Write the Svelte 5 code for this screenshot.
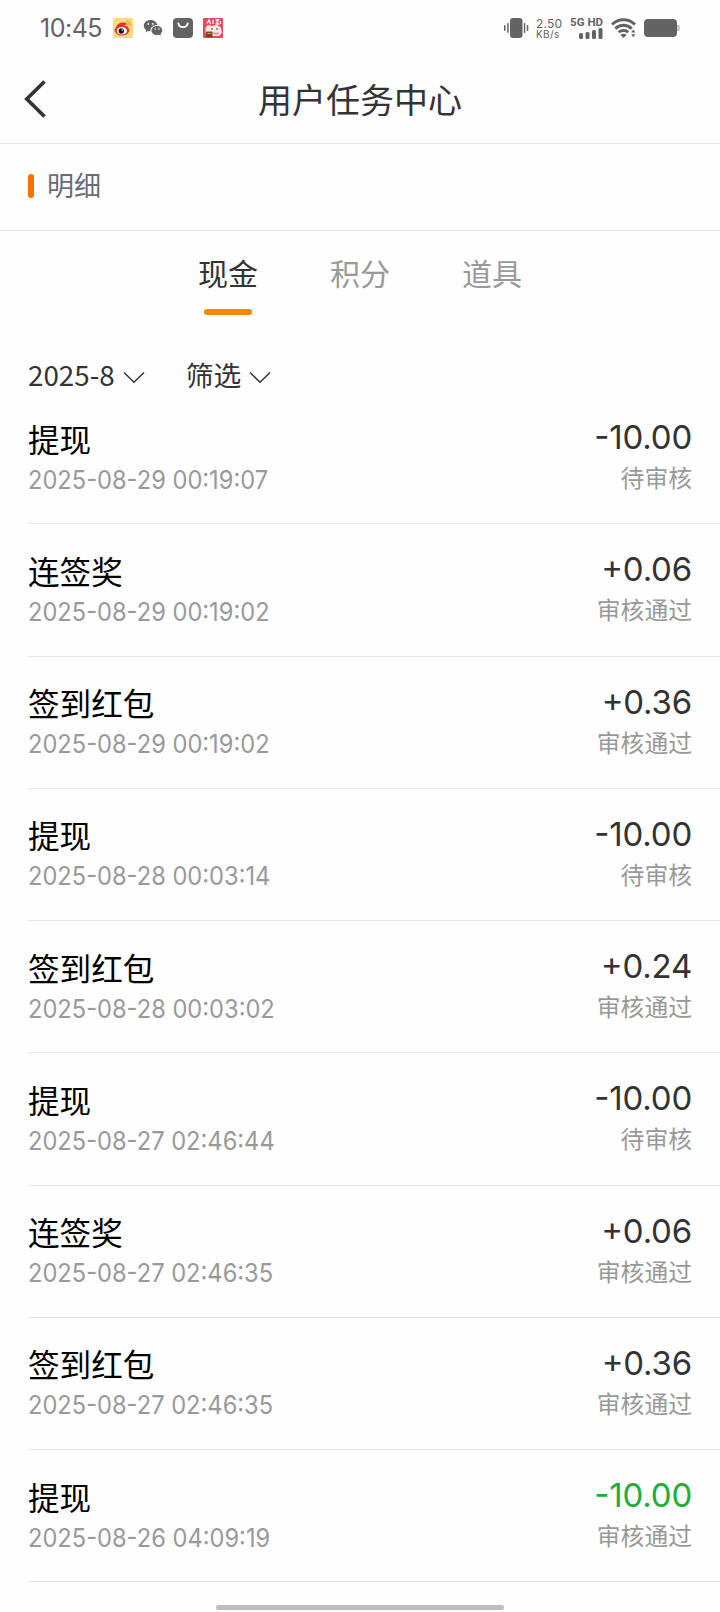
<script lang="ts">
  type Entry = {
    title: string;
    time: string;
    amount: string;
    status: string;
    income?: boolean;
  };

  const tabs = ["现金", "积分", "道具"];
  const filters = ["2025-8", "筛选"];

  const entries: Entry[] = [
    { title: "提现", time: "2025-08-29 00:19:07", amount: "-10.00", status: "待审核" },
    { title: "连签奖", time: "2025-08-29 00:19:02", amount: "+0.06", status: "审核通过" },
    { title: "签到红包", time: "2025-08-29 00:19:02", amount: "+0.36", status: "审核通过" },
    { title: "提现", time: "2025-08-28 00:03:14", amount: "-10.00", status: "待审核" },
    { title: "签到红包", time: "2025-08-28 00:03:02", amount: "+0.24", status: "审核通过" },
    { title: "提现", time: "2025-08-27 02:46:44", amount: "-10.00", status: "待审核" },
    { title: "连签奖", time: "2025-08-27 02:46:35", amount: "+0.06", status: "审核通过" },
    { title: "签到红包", time: "2025-08-27 02:46:35", amount: "+0.36", status: "审核通过" },
    { title: "提现", time: "2025-08-26 04:09:19", amount: "-10.00", status: "审核通过", income: true },
  ];

  let activeTab = $state(0);
</script>

<div class="screen">
  <div class="statusbar">
    <div class="left">
      <span class="clock">10:45</span>
      <svg class="app" viewBox="0 0 20 20">
        <rect width="20" height="20" rx="1.5" fill="#fbdc78" />
        <ellipse cx="9" cy="12.3" rx="7.3" ry="5.3" fill="#e0322d" />
        <path d="M3 9c1.500-3 5-5 6.500-4.200 1.500-.6 4-.4 4 1.800z" fill="#e0322d" />
        <ellipse cx="8.800" cy="12.800" rx="5.200" ry="3.700" fill="#fff" />
        <circle cx="8.300" cy="13" r="2.700" fill="#171717" />
        <circle cx="9.300" cy="12" r=".8" fill="#fff" />
        <path d="M13 3.500c3-.6 5 1.800 4.200 4.500M13.300 6c1.300-.2 2 .6 1.700 1.700" fill="none" stroke="#f2a52c" stroke-width="1.300" />
      </svg>
      <svg class="app" viewBox="0 0 20 20">
        <path d="M7.500 2C3.600 2 .8 4.500.8 7.700c0 1.800.9 3.300 2.400 4.400l-.7 2.200 2.600-1.300c.7.200 1.500.3 2.300.3-.2-4 3-6.300 7-6.200C13.700 4 11 2 7.500 2z" fill="#636363" />
        <path d="M14 7.900c-3.200 0-5.500 2-5.500 4.600 0 2.500 2.300 4.500 5.500 4.500.7 0 1.300-.1 1.900-.3l2.100 1.100-.6-1.800c1.200-.9 1.900-2.100 1.900-3.500 0-2.600-2.300-4.600-5.300-4.600z" fill="#636363" />
        <g fill="#fff">
          <circle cx="5.300" cy="5.900" r=".9" /><circle cx="9.700" cy="5.900" r=".9" />
          <circle cx="12.200" cy="11" r=".8" /><circle cx="15.900" cy="11" r=".8" />
        </g>
      </svg>
      <svg class="app" viewBox="0 0 20 20">
        <rect width="20" height="20" rx="4" fill="#636363" />
        <path d="M5.300 5.500a4.800 4.500 0 0 0 9.400 0" fill="none" stroke="#fff" stroke-width="1.800" stroke-linecap="round" />
      </svg>
      <svg class="app" viewBox="0 0 20 20">
        <rect width="20" height="20" rx="1" fill="#e34a60" />
        <path d="M2.500 15V9.500L5 7l4 1 5-1 4 2.500 1 5.500-3 3H7z" fill="#fbe6e2" />
        <path d="M4 5.500L6 2l1.500 4M10 2v4M12.500 2h3l-1.500 2 1.500 2h-3M17.500 3v3" fill="none" stroke="#fff" stroke-width="1.300" />
        <rect x="3" y="13.500" width="6.500" height="6" rx="1" fill="#764322" />
        <path d="M4.500 15.500h3.500" stroke="#d6a452" />
        <circle cx="9" cy="11" r=".8" fill="#502026" />
        <circle cx="14" cy="11" r=".8" fill="#502026" />
        <path d="M10.500 14.500c1 2 4 2 5 0" fill="none" stroke="#e9808c" stroke-width="1.300" />
      </svg>
    </div>
    <div class="right">
      <svg width="25" height="22" viewBox="0 0 25 22" fill="#636363">
        <rect x="6" y="1" width="12.500" height="20" rx="3" />
        <rect x="3.200" y="6" width="1.500" height="10" rx=".7" />
        <rect x="0" y="8" width="1.500" height="6" rx=".7" />
        <rect x="19.800" y="6" width="1.500" height="10" rx=".7" />
        <rect x="22.800" y="8" width="1.500" height="6" rx=".7" />
      </svg>
      <div class="speed">
        <span class="rate">2.50</span>
        <span class="unit">KB/s</span>
      </div>
      <div class="signal">
        <span class="net">5G HD</span>
        <svg width="24" height="11" viewBox="0 0 24 11" fill="#636363">
          <rect x="0" y="5" width="4" height="6" rx="1.500" />
          <rect x="6.500" y="4" width="4" height="7" rx="1.500" />
          <rect x="13" y="2" width="4" height="9" rx="1.500" />
          <rect x="19.500" y="0" width="4" height="11" rx="1.500" />
        </svg>
      </div>
      <svg class="wifi" width="25" height="20" viewBox="0 0 25 20">
        <g fill="none" stroke="#636363" stroke-width="2.900">
          <path d="M1 6.500C7.500.2 17.500.2 24 6.500" />
          <path d="M4.300 10.600c4.600-4.400 11.800-4.400 16.400 0" />
          <path d="M7.700 14.300c2.700-2.500 6.900-2.500 9.600 0" />
        </g>
        <path d="M9.300 16.800c1.800-1.500 4.600-1.500 6.400 0L12.500 20z" fill="#636363" />
        <path d="M20.200 14.500l2.100-3 2.100 3zM20.200 16.300l2.100 3 2.100-3z" fill="#636363" />
      </svg>
      <svg width="36" height="18" viewBox="0 0 36 18">
        <rect x="31" y="6" width="4.800" height="6" rx="1.500" fill="#c4c4c4" />
        <rect width="33" height="18" rx="4" fill="#636363" />
      </svg>
    </div>
  </div>

  <header class="navbar">
    <button type="button" class="back" aria-label="返回">
      <svg width="22" height="38" viewBox="0 0 22 38">
        <path d="M20.500 1.500L2.800 19l17.700 17.500" fill="none" stroke="#333" stroke-width="3.700" />
      </svg>
    </button>
    <h1>用户任务中心</h1>
  </header>

  <div class="section">
    <span class="mark"></span>
    <span class="label">明细</span>
  </div>

  <nav class="tabs">
    {#each tabs as tab, i (tab)}
      <button type="button" class="tab" class:active={i === activeTab} onclick={() => (activeTab = i)}>
        {tab}
      </button>
    {/each}
  </nav>

  <div class="filters">
    {#each filters as filter (filter)}
      <button type="button" class="filter">
        <span>{filter}</span>
        <svg width="22" height="13" viewBox="0 0 22 13">
          <path d="M1 1.500l10 9.700 10-9.700" fill="none" stroke="#333" stroke-width="1.500" />
        </svg>
      </button>
    {/each}
  </div>

  <ul class="list">
    {#each entries as entry, i (i)}
      <li class="row">
        <div class="info">
          <span class="title">{entry.title}</span>
          <span class="time">{entry.time}</span>
        </div>
        <div class="result">
          <span class="amount" class:income={entry.income}>{entry.amount}</span>
          <span class="state">{entry.status}</span>
        </div>
      </li>
    {/each}
  </ul>

  <div class="home"><span></span></div>
</div>

<style>
  :global(body) {
    background: #fefefe;
  }

  .screen {
    display: flex;
    flex-direction: column;
    width: 720px;
    height: 1612px;
    overflow: hidden;
    font-family: "Noto Sans CJK SC", sans-serif;
    color: #333;
  }

  button {
    background: transparent;
    border: none;
    padding: 0;
    font: inherit;
    color: inherit;
  }

  svg {
    display: block;
    flex: none;
  }

  .statusbar {
    flex: none;
    display: flex;
    justify-content: space-between;
    height: 56px;
    padding: 0 40px;
    font-family: Inter, sans-serif;
    color: #636363;
  }

  .left,
  .right {
    display: flex;
    align-items: center;
  }

  .clock {
    width: 73px;
    font-size: 25px;
    letter-spacing: -0.5px;
  }

  .app {
    width: 20px;
    height: 20px;
    margin-right: 10px;
  }

  .speed {
    display: flex;
    flex-direction: column;
    width: 25px;
    margin: 0 9px 0 7px;
    padding-top: 2px;
    line-height: 11px;
  }

  .rate {
    font-size: 12px;
    letter-spacing: 0.2px;
  }

  .unit {
    font-size: 10px;
    letter-spacing: 0.4px;
  }

  .signal {
    display: flex;
    flex-direction: column;
    align-items: flex-end;
    width: 33px;
    margin-right: 8px;
  }

  .net {
    font: bold 11.5px/11px Roboto, sans-serif;
    white-space: nowrap;
  }

  .wifi {
    margin-right: 8px;
  }

  .navbar {
    flex: none;
    display: grid;
    grid-template-columns: 80px 1fr 80px;
    align-items: center;
    height: 87px;
    border-bottom: 1px solid #e6e6e6;
  }

  .back {
    margin: 0 0 2px 24px;
    justify-self: start;
  }

  h1 {
    margin: 0;
    padding-bottom: 1px;
    font-size: 34px;
    font-weight: 400;
    line-height: 84px;
    text-align: center;
  }

  .section {
    flex: none;
    display: flex;
    align-items: center;
    gap: 13px;
    height: 86px;
    padding-left: 28px;
    border-bottom: 1px solid #e6e6e6;
    font-size: 27px;
    color: #666c78;
  }

  .mark {
    width: 6px;
    height: 24px;
    margin-bottom: 2px;
    border-radius: 3px;
    background: #ff6f00;
  }

  .label {
    padding-bottom: 6px;
  }

  .tabs {
    flex: none;
    display: flex;
    justify-content: center;
    gap: 72px;
    padding-top: 19px;
  }

  .tab {
    display: flex;
    flex-direction: column;
    align-items: center;
    height: 66px;
    font-size: 30px;
    line-height: 44px;
    color: #999;
  }

  .tab.active {
    color: #333;
  }

  .tab.active::after {
    content: "";
    width: 48px;
    height: 6px;
    margin-top: 15px;
    border-radius: 3px;
    background: #f98a08;
  }

  .filters {
    flex: none;
    display: flex;
    gap: 41px;
    height: 56px;
    padding: 20px 28px 0;
  }

  .filter {
    display: flex;
    align-items: center;
    gap: 8px;
    height: 80px;
    margin-top: -2px;
    font-size: 27.8px;
    line-height: 80px;
  }

  .filter svg {
    margin-top: 6px;
  }

  .list {
    flex: none;
    margin: 0;
    padding: 0 0 0 28px;
    list-style: none;
  }

  .row {
    box-sizing: border-box;
    display: flex;
    justify-content: space-between;
    height: 132.25px;
    padding-right: 28px;
    border-bottom: 1px solid #e6e6e6;
  }

  .info,
  .result {
    display: flex;
    flex-direction: column;
  }

  .info {
    padding-top: 25.5px;
  }

  .title {
    font-size: 31.6px;
    line-height: 40px;
    color: #000;
  }

  .time {
    padding-top: 2px;
    font: 400 26px/39px Inter, sans-serif;
    font-feature-settings: "case";
    color: #999;
    transform: scaleX(0.91);
    transform-origin: left;
  }

  .result {
    padding-top: 25px;
    align-items: flex-end;
  }

  .amount {
    font: 400 33px/40px Inter, sans-serif;
    font-feature-settings: "case";
    letter-spacing: -0.2px;
  }

  .amount.income {
    color: #22ac38;
  }

  .state {
    font-size: 23.8px;
    line-height: 40px;
    color: #999;
  }

  .home {
    flex: none;
    display: flex;
    justify-content: center;
    padding-top: 23px;
  }

  .home span {
    width: 288px;
    height: 5px;
    border-radius: 3px;
    background: #bebebe;
  }
</style>
